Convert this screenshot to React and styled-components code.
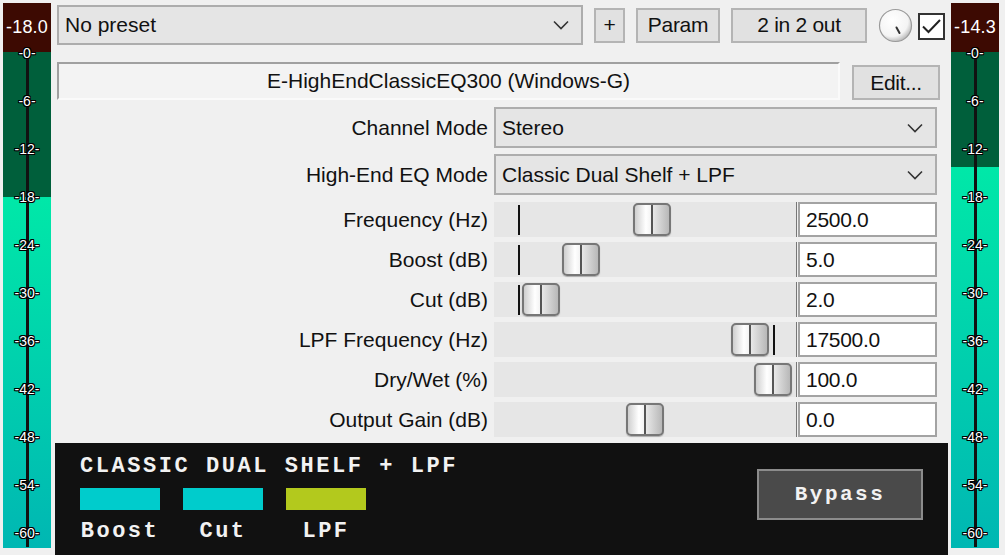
import React from 'react'
import styled, { createGlobalStyle } from 'styled-components'

const GlobalStyle = createGlobalStyle`
  html, body { margin: 0; padding: 0; background: #f0f0f0; }
  body {
    width: 1005px;
    height: 555px;
    overflow: hidden;
    font-family: "Liberation Sans", Arial, sans-serif;
    color: #111;
  }
`

const Window = styled.div`
  display: flex;
  align-items: flex-start;
  width: 1005px;
  height: 555px;
  box-sizing: border-box;
  padding: 3px 6px 0 3px;
`

/* ---------- level meters ---------- */

const MeterBox = styled.div`
  width: 48px;
  height: 545px;
  display: flex;
  flex-direction: column;
  flex-shrink: 0;
`

const Readout = styled.div`
  height: 49px;
  background: #3d0a02;
  color: #fff;
  font-size: 18px;
  letter-spacing: 0.2px;
  display: flex;
  align-items: center;
  justify-content: center;
`

const Scale = styled.div`
  position: relative;
  flex: 1;
  display: flex;
  flex-direction: column;
`

const Unlit = styled.div`
  height: ${p => p.$h}px;
  background: #005f3b;
`

const Lit = styled.div`
  flex: 1;
  background: linear-gradient(#00e8a8, #00b7b3);
`

const Needle = styled.div`
  position: absolute;
  left: 23px;
  top: 3px;
  bottom: 1px;
  width: 3px;
  background: #111;
`

const Ticks = styled.div`
  position: absolute;
  left: 0;
  right: 0;
  top: -23px;
  display: flex;
  flex-direction: column;
`

const Tick = styled.div`
  height: 48px;
  display: flex;
  align-items: center;
  justify-content: center;
  font-size: 14px;
  color: #fff;
  text-shadow:
    1px 0 0 #000, -1px 0 0 #000, 0 1px 0 #000, 0 -1px 0 #000,
    1px 1px 0 #000, -1px -1px 0 #000, 1px -1px 0 #000, -1px 1px 0 #000;
`

const TICKS = [0, 6, 12, 18, 24, 30, 36, 42, 48, 54, 60]

const Meter = ({ readout, level }) => (
  <MeterBox>
    <Readout>{readout}</Readout>
    <Scale>
      <Unlit $h={1 + -level * 8} />
      <Lit />
      <Needle />
      <Ticks>
        {TICKS.map(t => <Tick key={t}>{`-${t}-`}</Tick>)}
      </Ticks>
    </Scale>
  </MeterBox>
)

/* ---------- main plugin panel ---------- */

const Main = styled.div`
  width: 893px;
  height: 552px;
  margin: 0 3px 0 4px;
  display: flex;
  flex-direction: column;
`

const TopRow = styled.div`
  height: 44px;
  display: flex;
  align-items: center;
`

const Combo = styled.div`
  box-sizing: border-box;
  width: ${p => p.$w}px;
  height: ${p => p.$h || 40}px;
  margin-left: ${p => p.$ml || 0}px;
  background: #e5e5e5;
  border: 2px solid #adadad;
  display: flex;
  align-items: center;
  justify-content: space-between;
  padding: 0 12px 0 6px;
  font-size: 21px;
`

const Button = styled.div`
  box-sizing: border-box;
  width: ${p => p.$w}px;
  height: 35px;
  margin-left: ${p => p.$ml || 0}px;
  background: #e1e1e1;
  border: 2px solid #b4b4b4;
  display: flex;
  align-items: center;
  justify-content: center;
  font-size: 21px;
  letter-spacing: -0.3px;
`

const Knob = styled.svg`
  margin-left: 11px;
  width: 35px;
  height: 35px;
`

const Check = styled.svg`
  margin-left: 5px;
  margin-top: 3px;
  width: 27px;
  height: 27px;
`

const NameRow = styled.div`
  margin-top: 15px;
  height: 38px;
  display: flex;
  align-items: flex-end;
`

const NameField = styled.div`
  box-sizing: border-box;
  width: 783px;
  height: 38px;
  margin-left: 2px;
  border-top: 2px solid #a0a0a0;
  border-left: 2px solid #a0a0a0;
  border-right: 2px solid #fafafa;
  border-bottom: 2px solid #fafafa;
  background: #f3f3f3;
  display: flex;
  align-items: center;
  justify-content: center;
  font-size: 21px;
`

const Params = styled.div`
  margin-top: 7px;
  display: flex;
  flex-direction: column;
`

const Row = styled.div`
  display: grid;
  grid-template-columns: 433px 443px;
  column-gap: 6px;
  align-items: center;
  height: ${p => p.$h}px;
  margin-bottom: ${p => p.$gap}px;
`

const Label = styled.div`
  text-align: right;
  font-size: 21px;
  white-space: nowrap;
`

const SliderCell = styled.div`
  display: flex;
  height: 35px;
  gap: 1px;
`

const Track = styled.div`
  position: relative;
  width: 303px;
  height: 35px;
  box-sizing: border-box;
  background: #e6e6e6;
  border-right: 1px solid #777;
`

const Mark = styled.div`
  position: absolute;
  left: ${p => p.$x}px;
  top: 3px;
  width: 2px;
  height: 30px;
  background: #111;
`

const Thumb = styled.div`
  position: absolute;
  left: ${p => p.$x}px;
  top: 1px;
  box-sizing: border-box;
  width: 38px;
  height: 33px;
  border: 2px solid #777;
  border-radius: 5px;
  background: linear-gradient(
    to right,
    #cfcfcf 0%,
    #ffffff 32%,
    #f4f4f4 46%,
    #555 46%,
    #555 53%,
    #e8e8e8 53%,
    #b8b8b8 100%
  );
  box-shadow: 0 1px 1px rgba(0, 0, 0, 0.25);
`

const ValueBox = styled.div`
  box-sizing: border-box;
  width: 139px;
  height: 35px;
  background: #fff;
  border: 2px solid #a3a3a3;
  display: flex;
  align-items: center;
  padding-left: 6px;
  font-size: 21px;
  letter-spacing: -0.3px;
`

/* ---------- bottom status panel ---------- */

const Panel = styled.div`
  margin-top: 1px;
  flex: 1;
  background: #111;
  display: flex;
  justify-content: space-between;
  padding: 14px 25px 0 25px;
  font-family: "Liberation Mono", "DejaVu Sans Mono", monospace;
  font-weight: bold;
  color: #f2f2f2;
`

const PanelLeft = styled.div`
  display: flex;
  flex-direction: column;
`

const Title = styled.div`
  font-size: 22px;
  line-height: 20px;
  letter-spacing: 2.55px;
  white-space: nowrap;
`

const Legend = styled.div`
  margin-top: 11px;
  display: grid;
  grid-template-columns: repeat(3, 80px);
  column-gap: 23px;
  row-gap: 12px;
`

const Swatch = styled.div`
  height: 22px;
  background: ${p => p.$color};
`

const SwatchLabel = styled.div`
  text-align: center;
  font-size: 22px;
  line-height: 20px;
  letter-spacing: 2.5px;
`

const Bypass = styled.div`
  margin-top: 12px;
  box-sizing: border-box;
  width: 166px;
  height: 51px;
  background: #4a4a4a;
  border: 2px solid #8c8c8c;
  display: flex;
  align-items: center;
  justify-content: center;
  font-size: 21px;
  letter-spacing: 2.5px;
`

const Chevron = () => (
  <svg width="16" height="10" viewBox="0 0 16 10">
    <path d="M1 1.5 L8 8.5 L15 1.5" fill="none" stroke="#333" strokeWidth="1.6" />
  </svg>
)

const params = [
  { label: 'Frequency (Hz)', value: '2500.0', pos: 139, mark: 24 },
  { label: 'Boost (dB)', value: '5.0', pos: 68, mark: 24 },
  { label: 'Cut (dB)', value: '2.0', pos: 28, mark: 24 },
  { label: 'LPF Frequency (Hz)', value: '17500.0', pos: 237, mark: 279 },
  { label: 'Dry/Wet (%)', value: '100.0', pos: 260 },
  { label: 'Output Gain (dB)', value: '0.0', pos: 132 },
]

const legend = [
  { name: 'Boost', color: '#00cccc' },
  { name: 'Cut', color: '#00cccc' },
  { name: 'LPF', color: '#b3c91d' },
]

export default function App() {
  return (
    <>
      <GlobalStyle />
      <Window>
        <Meter readout="-18.0" level={-18} />
        <Main>
          <TopRow>
            <Combo $w={526} $ml={2}>
              <span>No preset</span>
              <Chevron />
            </Combo>
            <Button $w={31} $ml={11}>+</Button>
            <Button $w={84} $ml={11}>Param</Button>
            <Button $w={136} $ml={11}>2 in 2 out</Button>
            <Knob viewBox="0 0 35 35">
              <defs>
                <radialGradient id="kn" cx="40%" cy="35%" r="72%">
                  <stop offset="0%" stopColor="#ffffff" />
                  <stop offset="68%" stopColor="#f4f4f4" />
                  <stop offset="100%" stopColor="#aaaaaa" />
                </radialGradient>
              </defs>
              <circle cx="17.5" cy="17.5" r="16" fill="url(#kn)" stroke="#9a9a9a" strokeWidth="1.2" />
              <line x1="18.5" y1="19.5" x2="21.5" y2="25" stroke="#333" strokeWidth="2" strokeLinecap="round" />
            </Knob>
            <Check viewBox="0 0 27 27">
              <rect x="1" y="1" width="25" height="25" fill="#fff" stroke="#333" strokeWidth="2" />
              <path d="M5 13.5 L10.5 19 L22 7" fill="none" stroke="#222" strokeWidth="2" />
            </Check>
          </TopRow>

          <NameRow>
            <NameField>E-HighEndClassicEQ300 (Windows-G)</NameField>
            <Button $w={88} $ml={12}>Edit...</Button>
          </NameRow>

          <Params>
            <Row $h={41} $gap={6}>
              <Label>Channel Mode</Label>
              <Combo $w={443} $h={41}>
                <span>Stereo</span>
                <Chevron />
              </Combo>
            </Row>
            <Row $h={41} $gap={7}>
              <Label>High-End EQ Mode</Label>
              <Combo $w={443} $h={41}>
                <span>Classic Dual Shelf + LPF</span>
                <Chevron />
              </Combo>
            </Row>
            {params.map(p => (
              <Row key={p.label} $h={35} $gap={5}>
                <Label>{p.label}</Label>
                <SliderCell>
                  <Track>
                    {p.mark !== undefined && <Mark $x={p.mark} />}
                    <Thumb $x={p.pos} />
                  </Track>
                  <ValueBox>{p.value}</ValueBox>
                </SliderCell>
              </Row>
            ))}
          </Params>

          <Panel>
            <PanelLeft>
              <Title>CLASSIC DUAL SHELF + LPF</Title>
              <Legend>
                {legend.map(l => <Swatch key={l.name} $color={l.color} />)}
                {legend.map(l => <SwatchLabel key={l.name}>{l.name}</SwatchLabel>)}
              </Legend>
            </PanelLeft>
            <Bypass>Bypass</Bypass>
          </Panel>
        </Main>
        <Meter readout="-14.3" level={-14.3} />
      </Window>
    </>
  )
}
